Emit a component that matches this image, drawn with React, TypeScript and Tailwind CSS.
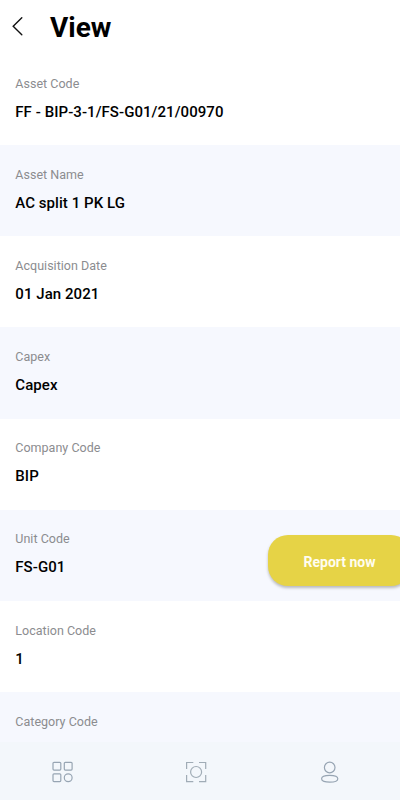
import React from 'react';

const fields = [
  { label: 'Asset Code', value: 'FF - BIP-3-1/FS-G01/21/00970' },
  { label: 'Asset Name', value: 'AC split 1 PK LG' },
  { label: 'Acquisition Date', value: '01 Jan 2021' },
  { label: 'Capex', value: 'Capex' },
  { label: 'Company Code', value: 'BIP' },
  { label: 'Unit Code', value: 'FS-G01' },
  { label: 'Location Code', value: '1' },
  { label: 'Category Code', value: '' },
];

function Field({ label, value, shaded }: { label: string; value: string; shaded: boolean }) {
  return (
    <div className={`flex h-[91.15px] shrink-0 flex-col px-[15.3px] pt-[21.7px] ${shaded ? 'bg-[#f6f8fe]' : 'bg-white'}`}>
      <div className="text-[12.5px] leading-4 tracking-[0.02px] text-[#8b8c8f]">{label}</div>
      <div className="mt-[10px] text-[15px] font-medium leading-5 tracking-[0.06px] text-black">{value}</div>
    </div>
  );
}

export default function App() {
  return (
    <div className="relative flex h-[800px] w-[400px] flex-col overflow-hidden bg-white font-['Roboto',sans-serif]">
      <header className="flex h-[54px] shrink-0 items-center pl-3">
        <svg className="mb-[3px] h-5 w-3 shrink-0" viewBox="0 0 12 20" fill="none" stroke="#111" strokeWidth="1.4" strokeLinecap="round">
          <path d="M9.8 1.7 1.2 10.2l8.6 8.5" />
        </svg>
        <h1 className="ml-[26px] pt-px text-[28px] font-bold leading-8 text-black">View</h1>
      </header>
      <main className="min-h-0 flex-1 overflow-hidden">
        {fields.map((f, i) => (
          <Field key={f.label} label={f.label} value={f.value} shaded={i % 2 === 1} />
        ))}
      </main>
      <button className="absolute left-[268px] top-[535px] h-[51px] w-[143px] rounded-[20px] bg-[#e6d346] pt-[3px] text-[14px] font-bold text-[#fffdf0] shadow-[0_2px_3px_rgba(0,0,0,0.25)]">
        Report now
      </button>
      <nav className="flex h-[58px] shrink-0 items-center justify-between bg-[#f3f7fb] pl-[52px] pr-[60px] pt-[2px]">
        <svg className="h-[22px] w-[22px]" viewBox="0 0 22 22" fill="none" stroke="#97a5b3" strokeWidth="1.2">
          <rect x="1" y="1.3" width="7.8" height="7.8" rx="1" />
          <rect x="12.3" y="1.3" width="7.8" height="7.8" rx="1" />
          <rect x="1" y="12.8" width="7.8" height="7.8" rx="1" />
          <circle cx="16.2" cy="16.7" r="3.9" />
        </svg>
        <svg className="h-[22px] w-[22px]" viewBox="0 0 22 22" fill="none" stroke="#a0acb6" strokeWidth="1.2">
          <path d="M7.3 1.5H.6V8M13 1.5h6.7V8M.6 14v6.7h6.7M19.7 14v6.7H13" />
          <circle cx="10.1" cy="11" r="5.5" />
        </svg>
        <svg className="h-[22px] w-[20px]" viewBox="0 0 20 22" fill="none" stroke="#97a5b3" strokeWidth="1.2">
          <circle cx="9.7" cy="6.5" r="5.3" />
          <path d="M1.6 17.7c0-2.6 3.4-3.4 8.1-3.4s8.1.8 8.1 3.4-3.4 3.5-8.1 3.5-8.1-.9-8.1-3.5Z" />
        </svg>
      </nav>
    </div>
  );
}
